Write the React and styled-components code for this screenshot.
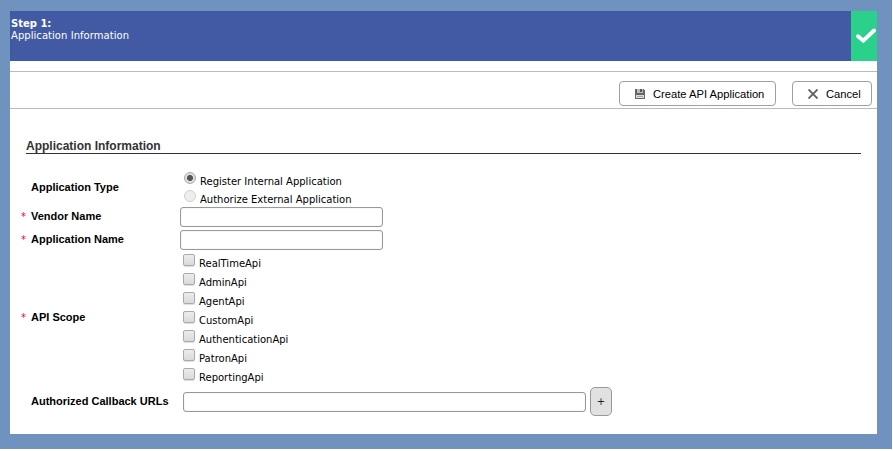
import React from "react";
import styled, { createGlobalStyle } from "styled-components";

const GlobalStyle = createGlobalStyle`
  * { box-sizing: border-box; }
  body { margin: 0; background: #fff; overflow: hidden; }
`;

const verdana = `Verdana, "DejaVu Sans", sans-serif`;
const arial = `Arial, "Liberation Sans", sans-serif`;

const Page = styled.div`
  width: 892px;
  height: 449px;
  padding: 11px 15px 15px 10px;
  background: #6f92bf;
`;

const Panel = styled.main`
  height: 423px;
  background: #fff;
`;

const StepBar = styled.header`
  display: flex;
  justify-content: space-between;
  height: 50px;
  background: #425aa3;
`;

const StepText = styled.div`
  padding: 7px 0 0 1px;
  font: 10px/12px ${verdana};
  letter-spacing: 0.05px;
  color: #fff;
`;

const StepTitle = styled.div`
  font-weight: bold;
  letter-spacing: 0;
`;

const StepDone = styled.div`
  display: flex;
  align-items: center;
  justify-content: flex-end;
  width: 26px;
  background: #2bd18b;
`;

const Toolbar = styled.div`
  display: flex;
  justify-content: flex-end;
  gap: 16px;
  height: 38px;
  margin-top: 10px;
  padding: 9px 5px 0 0;
  border: solid #bbb;
  border-width: 1px 0;
`;

const ToolButton = styled.button`
  display: flex;
  align-items: center;
  width: ${(p) => p.$width}px;
  height: 25px;
  padding: 0 0 0 15px;
  border: 1px solid #a0a0a0;
  border-radius: 4px;
  background: #fff;
  color: #000;
  font: 11.2px/14px ${arial};
  white-space: nowrap;

  svg { flex: none; margin-right: 8px; }
`;

const SectionTitle = styled.h2`
  height: 16px;
  width: 835px;
  margin: 29px 0 15px 16px;
  padding-top: 1px;
  border-bottom: 1px solid #333;
  color: #333;
  font: bold 12px/14px ${arial};
`;

const FormRow = styled.div`
  display: grid;
  grid-template-columns: 11px 149px auto;
  justify-content: start;
  align-items: center;
  height: ${(p) => p.$height}px;
  padding-left: 10px;
`;

const Required = styled.span`
  padding-left: 1px;
  color: #f0003d;
  font: 10px/12px ${verdana};
`;

const FieldLabel = styled.span`
  color: #000;
  font: bold 11px/13px ${arial};
  white-space: nowrap;
`;

const TextInput = styled.input`
  width: ${(p) => p.$width}px;
  height: 20px;
  margin: 0;
  padding: 0 4px;
  border: 1px solid #999;
  border-radius: 3px;
  background: #fff;
  box-shadow: inset 0 0 1px #bbb;
  outline: none;
  font: 11px ${verdana};
`;

const Option = styled.label`
  display: flex;
  align-items: flex-start;
  height: ${(p) => p.$height}px;
  padding: 3px 0 0 ${(p) => p.$indent}px;
  color: #000;
  font: 10px/12px ${verdana};
  white-space: nowrap;
`;

const OptionText = styled.span`
  margin: 4px 0 0 4px;
`;

const Radio = styled.input.attrs({ type: "radio" })`
  appearance: none;
  flex: none;
  width: 12px;
  height: 12px;
  margin: 0;
  border: 1px solid #aaa;
  border-radius: 50%;
  background: linear-gradient(#eee, #ddd);

  &:checked {
    background: radial-gradient(circle, #555 0 2.6px, #dedede 3.4px);
  }
  &:disabled {
    border-color: #d0d0d0;
    background: #eee;
  }
`;

const Checkbox = styled.input.attrs({ type: "checkbox" })`
  appearance: none;
  flex: none;
  width: 12px;
  height: 12px;
  margin: 0;
  border: 1px solid #aaa;
  border-radius: 2px;
  background: linear-gradient(#ececec, #dadada);
  box-shadow: 0 1px 1px #ddd;
`;

const CallbackFields = styled.div`
  display: flex;
  align-items: flex-end;
  gap: 4px;
  padding-left: 3px;

  input { margin-bottom: 4px; }
`;

const AddButton = styled.button`
  width: 22px;
  height: 29px;
  padding: 0;
  border: 1px solid #999;
  border-radius: 5px;
  background: #e1e1e1;
  color: #222;
  font: 10px/13px ${verdana};
`;

const CheckIcon = () => (
  <svg width="22" height="16" viewBox="0 0 22 16">
    <path d="M3 8.2 L8.3 12.7 L19 2.5" fill="none" stroke="#fff" strokeWidth="3.9" strokeLinecap="round" />
  </svg>
);

const SaveIcon = () => (
  <svg width="10" height="10" viewBox="0 0 10 10" shapeRendering="crispEdges">
    <path d="M0 0H9V1H10V10H0Z" fill="#666" />
    <path d="M2 0H8V4H2Z" fill="#bbb" />
    <path d="M5 0H7V3H5Z" fill="#555" />
    <path d="M1 6H9V9H1Z" fill="#ddd" />
    <path d="M2 7H8V8H2Z" fill="#aaa" />
  </svg>
);

const CloseIcon = () => (
  <svg width="10" height="10" viewBox="0 0 10 10">
    <path d="M.5 .5L9.5 9.5M9.5 .5L.5 9.5" stroke="#606060" strokeWidth="1.9" />
  </svg>
);

const scopes = ["RealTimeApi", "AdminApi", "AgentApi", "CustomApi", "AuthenticationApi", "PatronApi", "ReportingApi"];

function Field({ label, required, height, children }) {
  return (
    <FormRow $height={height}>
      <Required>{required ? "*" : ""}</Required>
      <FieldLabel>{label}</FieldLabel>
      {children}
    </FormRow>
  );
}

export default function App() {
  return (
    <Page>
      <GlobalStyle />
      <Panel>
        <StepBar>
          <StepText>
            <StepTitle>Step 1:</StepTitle>
            <div>Application Information</div>
          </StepText>
          <StepDone><CheckIcon /></StepDone>
        </StepBar>
        <Toolbar>
          <ToolButton $width={157}><SaveIcon />Create API Application</ToolButton>
          <ToolButton $width={80}><CloseIcon />Cancel</ToolButton>
        </Toolbar>
        <SectionTitle>Application Information</SectionTitle>
        <Field label="Application Type" height={36}>
          <div>
            <Option $height={18} $indent={4}><Radio name="type" defaultChecked /><OptionText>Register Internal Application</OptionText></Option>
            <Option $height={18} $indent={4}><Radio name="type" disabled /><OptionText>Authorize External Application</OptionText></Option>
          </div>
        </Field>
        <Field label="Vendor Name" required height={23}><TextInput $width={203} /></Field>
        <Field label="Application Name" required height={23}><TextInput $width={203} /></Field>
        <Field label="API Scope" required height={133}>
          <div>
            {scopes.map((name) => (
              <Option key={name} $height={19} $indent={3}><Checkbox /><OptionText>{name}</OptionText></Option>
            ))}
          </div>
        </Field>
        <Field label="Authorized Callback URLs" height={34}>
          <CallbackFields>
            <TextInput $width={403} />
            <AddButton>+</AddButton>
          </CallbackFields>
        </Field>
      </Panel>
    </Page>
  );
}
